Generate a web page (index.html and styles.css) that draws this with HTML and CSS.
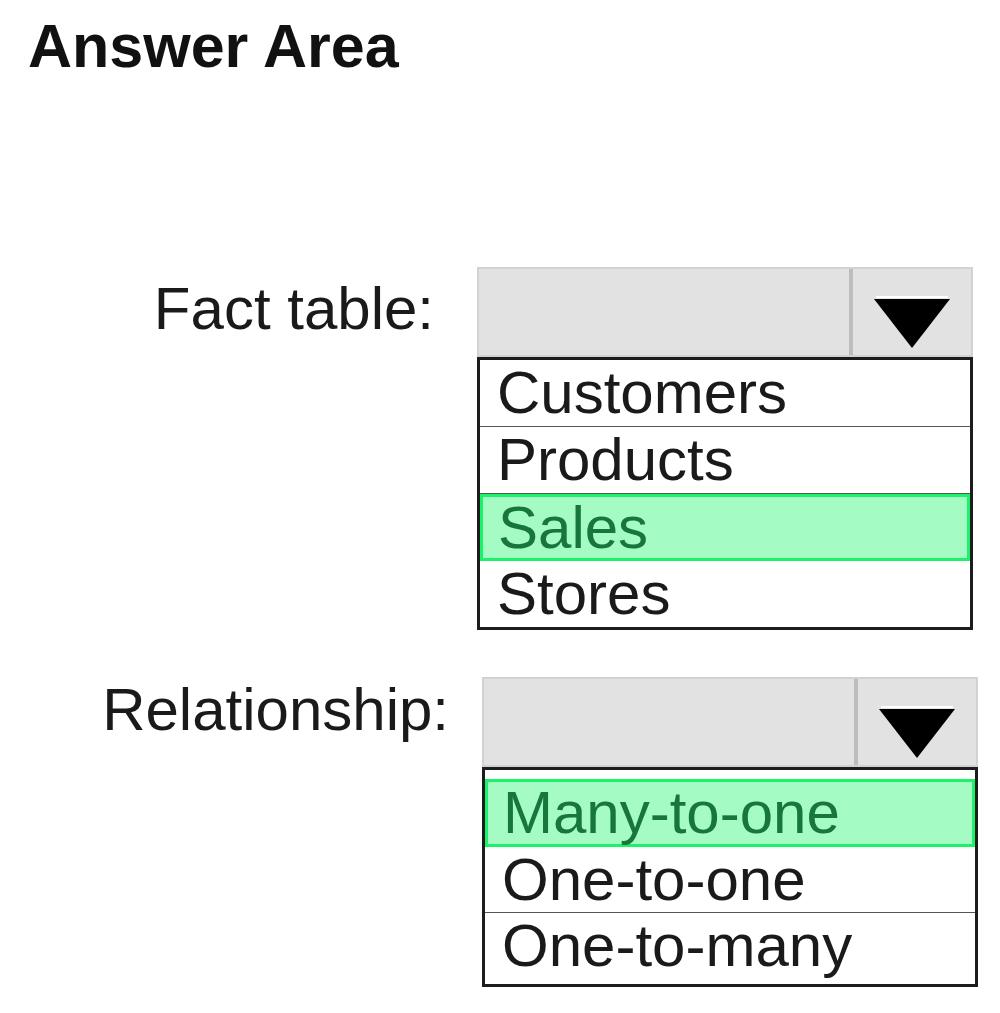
FILE: index.html
```html
<!DOCTYPE html>
<html lang="en">
<head>
  <meta charset="UTF-8">
  <title>Answer Area</title>
  <link rel="stylesheet" href="styles.css">
</head>
<body>
  <main class="answer-area">
    <h1 class="title">Answer Area</h1>

    <div class="question q-fact">
      <div class="label">Fact table:</div>
      <div class="dropdown">
        <div class="dropdown-head">
          <span class="dropdown-value"></span>
          <span class="dropdown-btn">
            <svg width="76" height="52" viewBox="0 0 76 52">
              <rect x="2" y="0" width="72" height="2" fill="#fff"/>
              <polygon points="0,3 76,3 38,52" fill="#000"/>
            </svg>
          </span>
        </div>
        <ul class="options">
          <li>Customers</li>
          <li>Products</li>
          <li class="picked">Sales</li>
          <li>Stores</li>
        </ul>
      </div>
    </div>

    <div class="question q-rel">
      <div class="label">Relationship:</div>
      <div class="dropdown">
        <div class="dropdown-head">
          <span class="dropdown-value"></span>
          <span class="dropdown-btn">
            <svg width="76" height="52" viewBox="0 0 76 52">
              <rect x="2" y="0" width="72" height="2" fill="#fff"/>
              <polygon points="0,3 76,3 38,52" fill="#000"/>
            </svg>
          </span>
        </div>
        <ul class="options">
          <li class="picked">Many-to-one</li>
          <li>One-to-one</li>
          <li>One-to-many</li>
        </ul>
      </div>
    </div>
  </main>
</body>
</html>
```

FILE: styles.css
```css
body {
  margin: 0;
  background: #fff;
  color: #1a1a1a;
  font-family: "Liberation Sans", Arial, sans-serif;
}
.answer-area {
  width: 1000px;
}
.title {
  margin: 16px 0 0 28px;
  font-size: 61px;
  line-height: 1;
  font-weight: bold;
  color: #111;
}

/* one question: label on the left, dropdown on the right */
.question {
  display: grid;
  grid-template-columns: 440px 496px;
  column-gap: 37px;
  align-items: start;
}
.q-fact {
  margin-top: 190px;
}
.q-rel {
  margin-top: 47px;
  padding-left: 5px;
}
.label {
  font-size: 60px;
  line-height: 60px;
  text-align: right;
  padding-top: 12px;
  padding-right: 6px;
}
.q-rel .label {
  padding-top: 3px;
  padding-right: 0;
  margin-right: -4px;
}

.dropdown-head {
  display: flex;
  height: 90px;
  box-sizing: border-box;
  border: 2px solid #d2d2d2;
  background: #e2e2e2;
}
.dropdown-value {
  flex: 1;
  border-right: 4px solid #bdbdbd;
}
.dropdown-btn {
  width: 118px;
  display: flex;
  justify-content: center;
  padding-top: 27px;
}

.options {
  margin: 0;
  padding: 0;
  list-style: none;
  border: 3px solid #1c1c1c;
  background: #fff;
}
.options li {
  height: 66px;
  padding-left: 17px;
  font-size: 60px;
  line-height: 66px;
  border-bottom: 1px solid #555;
}
.options li:last-child {
  border-bottom: 0;
}
.options li.picked {
  box-sizing: border-box;
  height: 67px;
  line-height: 61px;
  padding-left: 15px;
  background: #a4fbc4;
  border: 3px solid #1af26a;
  color: #17763c;
}
.q-rel .options {
  padding-top: 9px;
}
.q-rel .options li {
  height: 65px;
  line-height: 65px;
}
.q-rel .options li:last-child {
  height: 71px;
}
.q-rel .options li.picked {
  height: 68px;
  line-height: 62px;
}
```
